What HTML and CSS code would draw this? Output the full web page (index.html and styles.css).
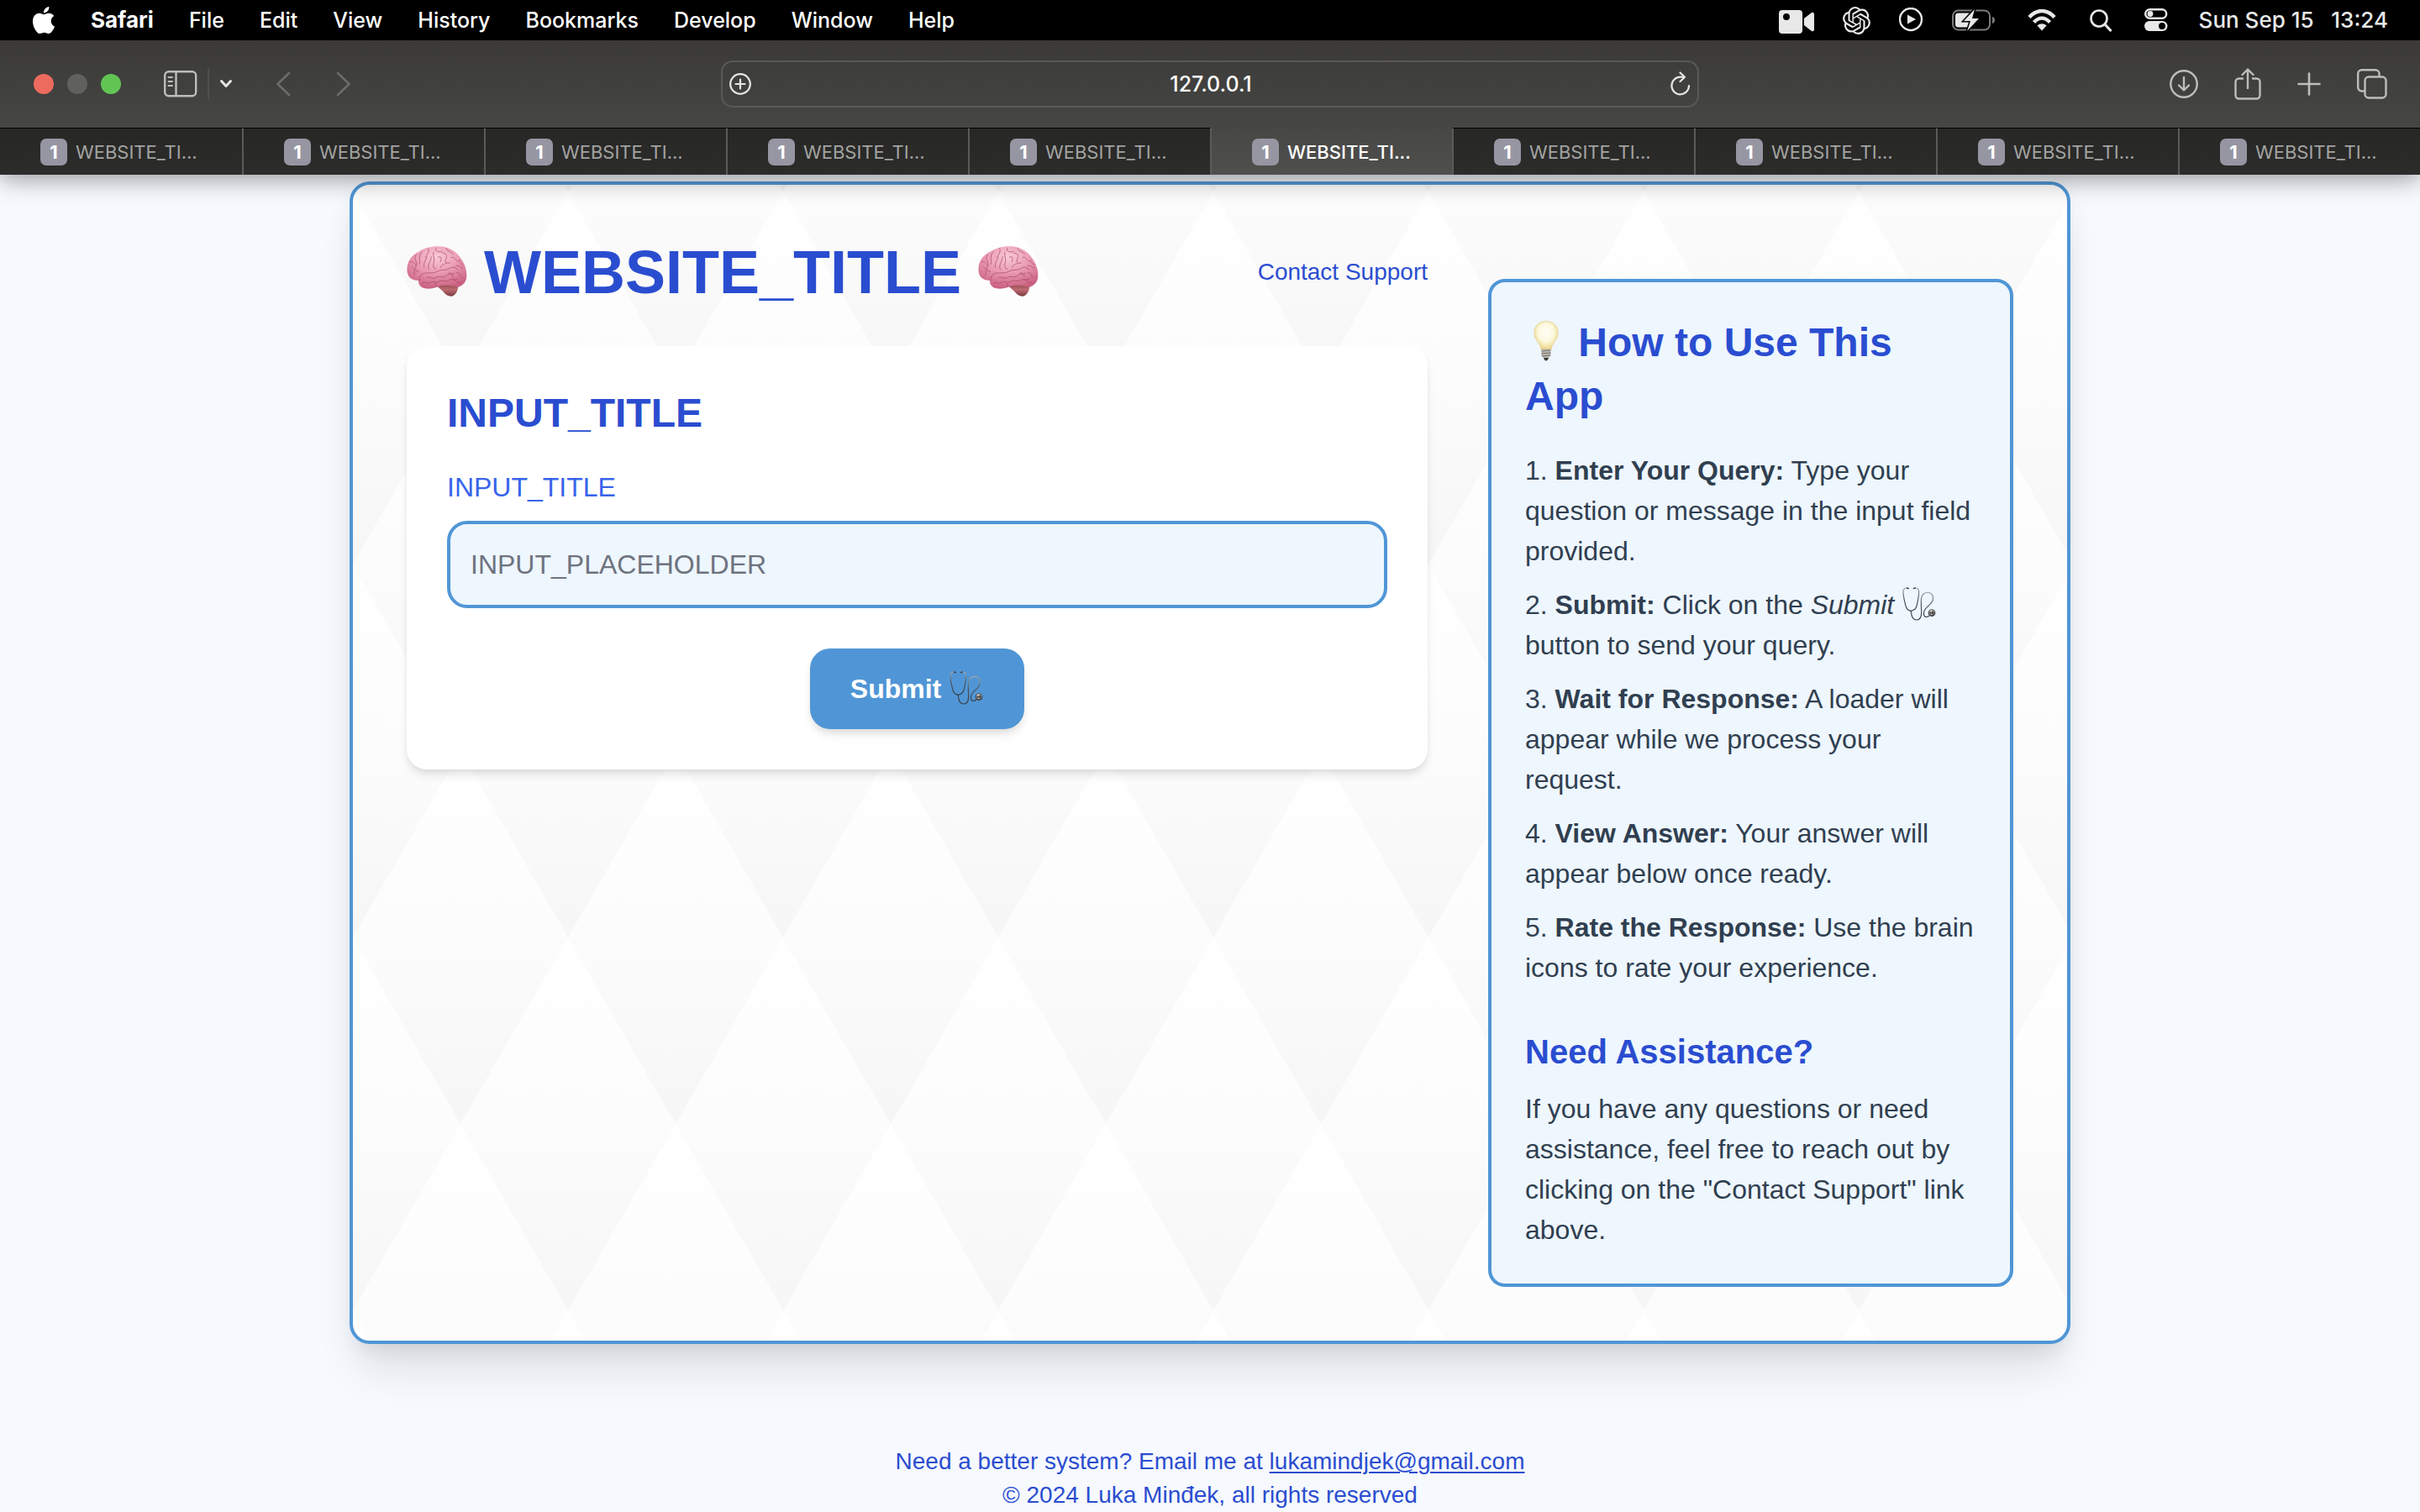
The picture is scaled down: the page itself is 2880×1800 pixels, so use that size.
FILE: index.html
```html
<!DOCTYPE html>
<html lang="en">
<head>
<meta charset="utf-8">
<title>WEBSITE_TITLE</title>
<meta name="viewport" content="width=device-width, initial-scale=1">
<link rel="stylesheet" href="styles.css">
</head>
<body>
<svg class="symbols" aria-hidden="true">
  <defs>
    <radialGradient id="brain-pink" cx="0.5" cy="0.25" r="0.75">
      <stop offset="0" stop-color="#f8c9d6"/><stop offset="0.5" stop-color="#ea9ab3"/><stop offset="1" stop-color="#c9607f"/>
    </radialGradient>
    <linearGradient id="brain-stem" x1="0" y1="0" x2="0" y2="1">
      <stop offset="0" stop-color="#84404a"/><stop offset="0.5" stop-color="#bd6a70"/><stop offset="1" stop-color="#7c3a40"/>
    </linearGradient>
    <radialGradient id="bulb-glass" cx="0.5" cy="0.4" r="0.6">
      <stop offset="0" stop-color="#fffefa"/><stop offset="0.55" stop-color="#fdf8dc"/><stop offset="1" stop-color="#ecd583"/>
    </radialGradient>
    <linearGradient id="tube" x1="0" y1="0" x2="0" y2="1">
      <stop offset="0" stop-color="#a3a8ae"/><stop offset="0.45" stop-color="#4b5157"/><stop offset="1" stop-color="#33383c"/>
    </linearGradient>
  </defs>
  <symbol id="brain" viewBox="0 0 216 180">
    <path fill="url(#brain-stem)" d="M108 142c6 8 14 12 22 20 8 12 18 17 28 17 14-1 24-16 26-36l-30-12z"/>
    <path fill="url(#brain-pink)" d="M2 92C-2 60 14 34 42 20 70 3 96 0 120 1c34 3 60 20 74 44 14 18 20 40 20 60 0 22-12 36-32 42-22-6-46-10-70-2-18 8-44 10-58 2-10-8-12-14-12-24C24 122 6 116 2 92z"/>
    <g fill="none" stroke="#a84766" stroke-width="3" stroke-linecap="round" opacity="0.7">
      <path d="M46 122c-4-14 8-26 24-26 18-2 26 2 40-6s30-2 42-10 24-4 30 4"/>
      <path d="M20 74c8 4 10 18 6 30M14 56c14-2 20 8 18 20s6 18 12 14M34 30c-12 18 6 24 2 40"/>
      <path d="M56 20c-18 16-6 26-10 44M66 40c12-14 16-24 10-32M62 76c-4-18 8-26 10-38M80 84c-10-14 6-26 8-46M96 22c-4 16 6 20 0 40-2 10 0 18 8 20"/>
      <path d="M104 8c-4 12 10 16 22 10M112 40c10-6 16 2 8 16M126 24c16 0 20 10 14 22s4 18 14 14M140 8c4 12 20 10 26 20M160 40c12-2 12 12 24 14M176 70c12-4 14 8 24 8M190 48c-8 6 4 16 10 18M122 76c2-14 14-8 20-16"/>
      <path d="M56 132c12-8 16 6 28-2s20 4 32-4 24 4 34-4 22 4 34-6M74 112c14-4 18 8 32 0s22 4 34-6 22-2 30-10M150 96c10-2 16 4 14 14M178 94c14 0 10 16 20 18M166 120c12 2 14 14 26 10M100 134c6-2 8 4 6 10"/>
    </g>
  </symbol>
  <symbol id="bulb" viewBox="0 0 96 96">
    <path fill="url(#bulb-glass)" stroke="#e6cc78" stroke-width="1.5" d="M48 1c17 0 28 12 28 28 0 17-15 23-16 39H36C35 52 20 46 20 29 20 13 31 1 48 1z"/>
    <path fill="#b9b6b0" d="M37 67h22v16l-5 5H42l-5-5z"/>
    <path stroke="#77746f" stroke-width="2.5" d="M37 72l22-2M37 78l22-2M38 84l20-2"/>
    <path fill="#3d3b38" d="M42 88h12c-1 5-4 7-6 7s-5-2-6-7z"/>
  </symbol>
  <symbol id="stethoscope" viewBox="0 0 120 120">
    <g fill="none" stroke="url(#tube)" stroke-width="3.4" stroke-linecap="round">
      <path d="M21 4C12 1 3 5 3 15c0 20 5 36 9 52 3 12 10 16 18 18M41 4c9-3 18 1 18 11 0 20-4 36-8 52-3 12-11 16-21 18"/>
      <path d="M31 86c1 18 7 31 20 31 14 0 18-14 17-34-1-16-2-32 0-46 3-13 12-18 23-18 14 0 20 12 18 24-2 20-28 26-32 46-3 16 6 22 18 14"/>
    </g>
    <path stroke="#3a3f44" stroke-width="4" stroke-linecap="round" d="M16 3l6 2M46 3l-6 2"/>
    <circle cx="105" cy="92" r="13" fill="#474a4d"/>
    <circle cx="105" cy="90" r="9" fill="#c9c2bf"/>
    <path fill="#393b3e" d="M97 88l8 3 4-9 4 10-4 8-3-7-7 4z"/>
  </symbol>
</svg>

<header class="browser">
  <div class="menubar">
    <nav class="menus" aria-label="Menu bar">
      <svg class="apple" viewBox="2 0 20 24" role="img" aria-label="Apple"><path fill="currentColor" d="M12.152 6.896c-.948 0-2.415-1.078-3.96-1.04-2.04.027-3.91 1.183-4.961 3.014-2.117 3.675-.546 9.103 1.519 12.09 1.013 1.454 2.208 3.09 3.792 3.039 1.52-.065 2.09-.987 3.935-.987 1.831 0 2.35.987 3.96.948 1.637-.026 2.676-1.48 3.676-2.948 1.156-1.688 1.636-3.325 1.662-3.415-.039-.013-3.182-1.221-3.22-4.857-.026-3.04 2.48-4.494 2.597-4.559-1.429-2.09-3.623-2.324-4.39-2.376-2-.156-3.675 1.09-4.61 1.09zM15.53 3.83c.843-1.012 1.4-2.427 1.245-3.83-1.207.052-2.662.805-3.532 1.818-.78.896-1.454 2.338-1.273 3.714 1.338.104 2.715-.688 3.559-1.701"/></svg>
      <button type="button" class="menu app">Safari</button>
      <button type="button" class="menu">File</button>
      <button type="button" class="menu">Edit</button>
      <button type="button" class="menu">View</button>
      <button type="button" class="menu">History</button>
      <button type="button" class="menu">Bookmarks</button>
      <button type="button" class="menu">Develop</button>
      <button type="button" class="menu">Window</button>
      <button type="button" class="menu">Help</button>
    </nav>
    <div class="status">
      <svg width="42" height="32" viewBox="0 0 42 32" fill="currentColor"><path fill-rule="evenodd" d="M4 4h20a4 4 0 0 1 4 4v20a4 4 0 0 1-4 4H4a4 4 0 0 1-4-4V8a4 4 0 0 1 4-4zm5 4a4 4 0 1 0 0 8 4 4 0 0 0 0-8z"/><path d="M30 14l9-7q3-1 3 2v18q0 3-3 2l-9-7z"/></svg>
      <svg width="33" height="33" viewBox="0 0 24 24" fill="currentColor"><path d="M22.2819 9.8211a5.9847 5.9847 0 0 0-.5157-4.9108 6.0462 6.0462 0 0 0-6.5098-2.9A6.0651 6.0651 0 0 0 4.9807 4.1818a5.9847 5.9847 0 0 0-3.9977 2.9 6.0462 6.0462 0 0 0 .7427 7.0966 5.98 5.98 0 0 0 .511 4.9107 6.051 6.051 0 0 0 6.5146 2.9001A5.9847 5.9847 0 0 0 13.2599 24a6.0557 6.0557 0 0 0 5.7718-4.2058 5.9894 5.9894 0 0 0 3.9977-2.9001 6.0557 6.0557 0 0 0-.7475-7.0729zm-9.022 12.6081a4.4755 4.4755 0 0 1-2.8764-1.0408l.1419-.0804 4.7783-2.7582a.7948.7948 0 0 0 .3927-.6813v-6.7369l2.02 1.1686a.071.071 0 0 1 .038.052v5.5826a4.504 4.504 0 0 1-4.4945 4.4944zm-9.6607-4.1254a4.4708 4.4708 0 0 1-.5346-3.0137l.142.0852 4.783 2.7582a.7712.7712 0 0 0 .7806 0l5.8428-3.3685v2.3324a.0804.0804 0 0 1-.0332.0615L9.74 19.9502a4.4992 4.4992 0 0 1-6.1408-1.6464zM2.3408 7.8956a4.485 4.485 0 0 1 2.3655-1.9728V11.6a.7664.7664 0 0 0 .3879.6765l5.8144 3.3543-2.0201 1.1685a.0757.0757 0 0 1-.071 0l-4.8303-2.7865A4.504 4.504 0 0 1 2.3408 7.872zm16.5963 3.8558L13.1038 8.364 15.1192 7.2a.0757.0757 0 0 1 .071 0l4.8303 2.7913a4.4944 4.4944 0 0 1-.6765 8.1042v-5.6772a.79.79 0 0 0-.407-.667zm2.0107-3.0231l-.142-.0852-4.7735-2.7818a.7759.7759 0 0 0-.7854 0L9.409 9.2297V6.8974a.0662.0662 0 0 1 .0284-.0615l4.8303-2.7866a4.4992 4.4992 0 0 1 6.6802 4.66zM8.3065 12.863l-2.02-1.1638a.0804.0804 0 0 1-.038-.0567V6.0742a4.4992 4.4992 0 0 1 7.3757-3.4537l-.142.0805L8.704 5.459a.7948.7948 0 0 0-.3927.6813zm1.0976-2.3654l2.602-1.4998 2.6069 1.4998v2.9994l-2.5974 1.4997-2.6067-1.4997Z"/></svg>
      <svg width="29" height="30" viewBox="0 0 29 30"><circle cx="14" cy="14" r="13" fill="none" stroke="currentColor" stroke-width="2.4"/><path fill="currentColor" d="M10 8.500l10 5.500-10 5.500z"/></svg>
      <svg width="56" height="26" viewBox="0 0 56 26"><rect x="1" y="1.500" width="44" height="23" rx="6.500" fill="none" stroke="#7b7b7b" stroke-width="2"/><rect x="4" y="4.500" width="19" height="17" rx="3.500" fill="currentColor"/><path fill="#7b7b7b" d="M48 9c4 1 4 7 0 8z"/><path fill="currentColor" stroke="#000" stroke-width="3" paint-order="stroke" d="M27 0L14 14h8l-4 12 14-15h-8z"/></svg>
      <svg width="40" height="26" viewBox="0 0 40 26" fill="none" stroke="currentColor" stroke-width="4.400"><path d="M2 9.500C11-.500 23-.500 32 9.500"/><path d="M7.500 15.500c6-6.500 13-6.500 19 0"/><path fill="currentColor" stroke="none" d="M17 25.500l-5.500-6c3-3 8-3 11 0z"/></svg>
      <svg width="31" height="27" viewBox="0 0 31 27" fill="none" stroke="currentColor" stroke-width="2.600" stroke-linecap="round"><circle cx="11" cy="11" r="9.500"/><path stroke-width="3.200" d="M18.500 18.500l6 6.500"/></svg>
      <svg width="31" height="28" viewBox="0 0 31 28"><rect x="1.200" y="1.200" width="25" height="10.500" rx="5.250" fill="none" stroke="currentColor" stroke-width="2.400"/><circle cx="7" cy="6.500" r="3.400" fill="currentColor"/><rect y="15" width="27.500" height="12" rx="6" fill="currentColor"/><circle cx="21" cy="21" r="4"/></svg>
      <time class="clock" datetime="2024-09-15T13:24">Sun Sep 15&nbsp;&nbsp; 13:24</time>
    </div>
  </div>

  <div class="toolbar">
    <div class="tools-left">
      <div class="lights"><span class="light red"></span><span class="light gray"></span><span class="light green"></span></div>
      <div class="side-group">
        <button type="button" class="tool" aria-label="Sidebar"><svg width="40" height="32" viewBox="0 0 40 32" fill="none" stroke="currentColor" stroke-width="2.400"><rect x="1.200" y="1.200" width="37" height="29" rx="4.500"/><path d="M14.500 1v30"/><path stroke-width="2" stroke-linecap="round" d="M5.500 8h4.500M5.500 13h4.500M5.500 18h4.500"/></svg></button>
        <span class="rule"></span>
        <button type="button" class="tool bright" aria-label="Tab groups"><svg width="16" height="12" viewBox="0 0 16 12" fill="none" stroke="currentColor" stroke-width="3" stroke-linecap="round" stroke-linejoin="round"><path d="M2.500 2.500L8 8.500l5.500-6"/></svg></button>
      </div>
      <div class="history">
        <button type="button" class="tool dim" aria-label="Back"><svg width="18" height="30" viewBox="0 0 18 30" fill="none" stroke="currentColor" stroke-width="2.600" stroke-linecap="round" stroke-linejoin="round"><path d="M16 2L2.500 15 16 28"/></svg></button>
        <button type="button" class="tool dim" aria-label="Forward"><svg width="18" height="30" viewBox="0 0 18 30" fill="none" stroke="currentColor" stroke-width="2.600" stroke-linecap="round" stroke-linejoin="round"><path d="M2 2l13.500 13L2 28"/></svg></button>
      </div>
    </div>
    <form class="address">
      <svg width="26" height="26" viewBox="0 0 26 26" fill="none" stroke="currentColor" stroke-width="2.200" stroke-linecap="round"><circle cx="13" cy="13" r="11.800"/><path d="M13 7.500v11M7.500 13h11"/></svg>
      <input class="url" type="text" value="127.0.0.1" aria-label="Address">
      <button type="button" class="tool bright" aria-label="Reload"><svg width="24" height="30" viewBox="0 0 24 30" fill="none" stroke="currentColor" stroke-width="2.200" stroke-linecap="round" stroke-linejoin="round"><path d="M22 17a10.300 10.300 0 1 1-10-10.300h5M11.500 1.500l5.500 5.200-5.500 5.300"/></svg></button>
    </form>
    <div class="tools-right">
      <button type="button" class="tool" aria-label="Downloads"><svg width="34" height="34" viewBox="0 0 34 34" fill="none" stroke="currentColor" stroke-width="2.400" stroke-linecap="round" stroke-linejoin="round"><circle cx="17" cy="17" r="15.700"/><path d="M17 9v15M11 18.500l6 6 6-6"/></svg></button>
      <button type="button" class="tool" aria-label="Share"><svg width="32" height="38" viewBox="0 0 32 38" fill="none" stroke="currentColor" stroke-width="2.400" stroke-linecap="round" stroke-linejoin="round"><path d="M10 12.500H5.500a4 4 0 0 0-4 4v16a4 4 0 0 0 4 4h21a4 4 0 0 0 4-4v-16a4 4 0 0 0-4-4H22M16 24V2M9.500 8L16 1.500 22.500 8"/></svg></button>
      <button type="button" class="tool" aria-label="New tab"><svg width="28" height="28" viewBox="0 0 28 28" fill="none" stroke="currentColor" stroke-width="2.600" stroke-linecap="round"><path d="M14 1.500v25M1.500 14h25"/></svg></button>
      <button type="button" class="tool" aria-label="Tab overview"><svg width="36" height="36" viewBox="0 0 36 36" fill="none" stroke="currentColor" stroke-width="2.400" stroke-linejoin="round"><rect x="9.500" y="9.500" width="25" height="25" rx="4.500"/><path d="M9.500 26.500H5.700a4.500 4.500 0 0 1-4.500-4.500V5.700a4.500 4.500 0 0 1 4.500-4.500H22a4.500 4.500 0 0 1 4.500 4.500v3.800"/></svg></button>
    </div>
  </div>

  <nav class="tabs" aria-label="Tabs">
    <a class="tab" href="#"><span class="favicon">1</span>WEBSITE_TI...</a>
    <a class="tab" href="#"><span class="favicon">1</span>WEBSITE_TI...</a>
    <a class="tab" href="#"><span class="favicon">1</span>WEBSITE_TI...</a>
    <a class="tab" href="#"><span class="favicon">1</span>WEBSITE_TI...</a>
    <a class="tab" href="#"><span class="favicon">1</span>WEBSITE_TI...</a>
    <a class="tab active" href="#" aria-current="page"><span class="favicon">1</span>WEBSITE_TI...</a>
    <a class="tab" href="#"><span class="favicon">1</span>WEBSITE_TI...</a>
    <a class="tab" href="#"><span class="favicon">1</span>WEBSITE_TI...</a>
    <a class="tab" href="#"><span class="favicon">1</span>WEBSITE_TI...</a>
    <a class="tab" href="#"><span class="favicon">1</span>WEBSITE_TI...</a>
  </nav>
</header>

<div class="page">
  <div class="shell">
    <main class="content">
      <div class="masthead">
        <h1 class="title"><svg class="emoji-brain" role="img" aria-label="Brain"><use href="#brain"/></svg> WEBSITE_TITLE <svg class="emoji-brain" role="img" aria-label="Brain"><use href="#brain"/></svg></h1>
        <a class="support" href="#">Contact Support</a>
      </div>
      <form class="query">
        <h2 class="heading">INPUT_TITLE</h2>
        <label class="query-label" for="query">INPUT_TITLE</label>
        <input class="query-input" id="query" type="text" placeholder="INPUT_PLACEHOLDER">
        <button class="submit" type="button">Submit <svg class="emoji-scope" aria-hidden="true"><use href="#stethoscope"/></svg></button>
      </form>
    </main>
    <aside class="guide">
      <h2 class="heading"><svg class="emoji-bulb" aria-hidden="true"><use href="#bulb"/></svg> How to Use This App</h2>
      <ol class="steps">
        <li><strong>Enter Your Query:</strong> Type your question or message in the input field provided.</li>
        <li><strong>Submit:</strong> Click on the <em>Submit</em> <svg class="emoji-scope" aria-hidden="true"><use href="#stethoscope"/></svg> button to send your query.</li>
        <li><strong>Wait for Response:</strong> A loader will appear while we process your request.</li>
        <li><strong>View Answer:</strong> Your answer will appear below once ready.</li>
        <li><strong>Rate the Response:</strong> Use the brain icons to rate your experience.</li>
      </ol>
      <h3 class="subheading">Need Assistance?</h3>
      <p class="help">If you have any questions or need assistance, feel free to reach out by clicking on the "Contact Support" link above.</p>
    </aside>
  </div>
  <footer class="footer">
    <p>Need a better system? Email me at <a href="mailto:lukamindjek@gmail.com">lukamindjek@gmail.com</a></p>
    <p>© 2024 Luka Minđek, all rights reserved</p>
  </footer>
</div>
</body>
</html>
```

FILE: styles.css
```css
:root {
  --accent: #5096d6;
  --title: #2a4dd0;
  --ink: #303f50;
  --tint: #eef6fe;
  --sans: "Liberation Sans", Arial, sans-serif;
  --system: Inter, "Liberation Sans", sans-serif;
}

*, *::before, *::after { box-sizing: border-box; }

body {
  margin: 0;
  background: #f6f9fe;
  color: var(--ink);
  font: 32px/48px var(--sans);
}

h1, h2, h3, p, ol { margin: 0; padding: 0; }
button, input { font: inherit; color: inherit; }
button { border: 0; padding: 0; background: none; }
a { color: inherit; text-decoration: none; }
svg { flex: none; }

.symbols { position: absolute; width: 0; height: 0; }

/* Browser window */
.browser {
  position: relative;
  z-index: 1;
  font-family: var(--system);
  box-shadow: 0 4px 28px rgba(0, 0, 0, 0.42);
}

.menubar {
  display: flex;
  justify-content: space-between;
  align-items: center;
  height: 48px;
  padding: 0 38px;
  background: #000;
  color: #fff;
  font-size: 25px;
  line-height: 46px;
  white-space: nowrap;
}
.menus { display: flex; align-items: center; gap: 42px; }
.apple { width: 28px; height: 32px; }
.menu { font-weight: 500; }
.app { font-size: 26px; font-weight: 700; }
.status { display: flex; align-items: center; gap: 34px; color: #e8e8e8; }
.clock { font-size: 26px; font-weight: 500; }

.toolbar {
  display: grid;
  grid-template-columns: 429fr 582fr 429fr;
  align-items: center;
  height: 104px;
  background: linear-gradient(#3b3a38, #464644);
}
.tool { display: flex; color: #bdbdbc; }
.bright { color: #e6e6e5; }
.dim { color: #6c6c6a; }
.tools-left { display: flex; align-items: center; gap: 51px; padding-left: 40px; }
.lights { display: flex; gap: 16px; }
.light { width: 24px; height: 24px; border-radius: 50%; }
.red { background: #ed6a5e; }
.gray { background: #60605f; }
.green { background: #61c554; }
.side-group { display: flex; align-items: center; gap: 12px; }
.rule { width: 2px; height: 36px; background: #50504e; }
.history { display: flex; gap: 54px; }
.address {
  display: flex;
  align-items: center;
  height: 56px;
  padding: 0 8px;
  border: 2px solid #595957;
  border-radius: 14px;
  color: #e6e6e5;
}
.url {
  flex: 1;
  min-width: 0;
  border: 0;
  padding: 0;
  background: none;
  color: #fff;
  font-size: 25px;
  font-weight: 500;
  line-height: 40px;
  text-align: center;
}
.tools-right { display: flex; align-items: center; justify-content: flex-end; gap: 43px; padding-right: 39px; }

.tabs {
  display: grid;
  grid-template-columns: repeat(10, 1fr);
  height: 56px;
  background: #464644;
}
.tab {
  display: flex;
  align-items: center;
  gap: 10px;
  overflow: hidden;
  padding-left: 48px;
  border-top: 1px solid #000;
  background: linear-gradient(#272726, #2c2c2a);
  color: #a3a3a2;
  font-size: 22px;
  line-height: 32px;
  white-space: nowrap;
}
.tab + .tab { border-left: 2px solid #5b5b59; }
.tab.active { border-top-color: #464644; background: linear-gradient(#474745, #4f4f4d); color: #fff; font-weight: 500; }
.favicon {
  width: 32px;
  height: 32px;
  border-radius: 7px;
  background: #9696a3;
  color: #fff;
  font-weight: 700;
  text-align: center;
}

/* Web page */
.page { padding: 8px 32px 0; }

.shell {
  display: grid;
  grid-template-columns: 1215fr 625fr;
  gap: 72px;
  max-width: 2048px;
  margin: 0 auto;
  padding: 64px;
  border: 4px solid var(--accent);
  border-radius: 24px;
  background: #fbfbfb url("data:image/svg+xml,%3Csvg xmlns='http://www.w3.org/2000/svg' width='256' height='444'%3E%3Cdefs%3E%3ClinearGradient id='g' x2='0' y2='1'%3E%3Cstop stop-color='%23fff'/%3E%3Cstop offset='.5' stop-color='%23fcfcfc'/%3E%3Cstop offset='1' stop-color='%23f6f6f6'/%3E%3C/linearGradient%3E%3C/defs%3E%3Cg fill='url(%23g)'%3E%3Cpath d='M0 0l128 222L0 444-128 222z'/%3E%3Cpath d='M256 0l128 222-128 222-128-222z'/%3E%3Cpath d='M128-222L256 0 128 222 0 0z'/%3E%3Cpath d='M128 222l128 222-128 222L0 444z'/%3E%3C/g%3E%3C/svg%3E") 0 8px;
  box-shadow: 0 40px 50px -10px rgba(0, 0, 0, 0.1), 0 20px 20px -10px rgba(0, 0, 0, 0.05), 0 0 32px rgba(0, 0, 0, 0.04);
}

.masthead {
  display: flex;
  justify-content: space-between;
  align-items: center;
  margin-bottom: 48px;
}
.title { color: var(--title); font-size: 72px; line-height: 80px; }
.support { color: var(--title); font-size: 28px; line-height: 40px; }
.emoji-brain { width: 72px; height: 60px; vertical-align: -4px; }
.emoji-bulb { width: 50px; height: 48px; vertical-align: -6px; }
.emoji-scope { width: 42px; height: 40px; vertical-align: -8px; }

.query {
  display: flex;
  flex-direction: column;
  padding: 48px;
  border-radius: 24px;
  background: #fff;
  box-shadow: 0 8px 12px -2px rgba(0, 0, 0, 0.1), 0 4px 8px -2px rgba(0, 0, 0, 0.06);
}
.heading { margin-bottom: 32px; color: var(--title); font-size: 48px; line-height: 64px; }
.query-label { margin-bottom: 16px; color: #3864ea; }
.query-input {
  width: 100%;
  height: 104px;
  padding: 24px;
  border: 4px solid var(--accent);
  border-radius: 24px;
  background: var(--tint);
}
.query-input::placeholder { color: #6e7380; opacity: 1; }
.submit {
  align-self: center;
  margin-top: 48px;
  padding: 24px 48px;
  border-radius: 24px;
  background: var(--accent);
  box-shadow: 0 8px 12px -2px rgba(0, 0, 0, 0.1), 0 4px 8px -2px rgba(0, 0, 0, 0.06);
  color: #fff;
  font-weight: 700;
}

.guide {
  margin-top: 48px;
  padding: 40px;
  border: 4px solid var(--accent);
  border-radius: 20px;
  background: var(--tint);
}
.steps {
  display: grid;
  gap: 16px;
  margin-bottom: 48px;
  list-style: none;
  counter-reset: step;
}
.steps li { counter-increment: step; }
.steps li::before { content: counter(step) ". "; }
.subheading { margin-bottom: 16px; color: var(--title); font-size: 40px; line-height: 56px; }

.footer {
  padding-top: 120px;
  color: var(--title);
  font-size: 28px;
  line-height: 40px;
  text-align: center;
}
.footer a { text-decoration: underline; text-underline-offset: 3px; text-decoration-thickness: 2px; }
```
